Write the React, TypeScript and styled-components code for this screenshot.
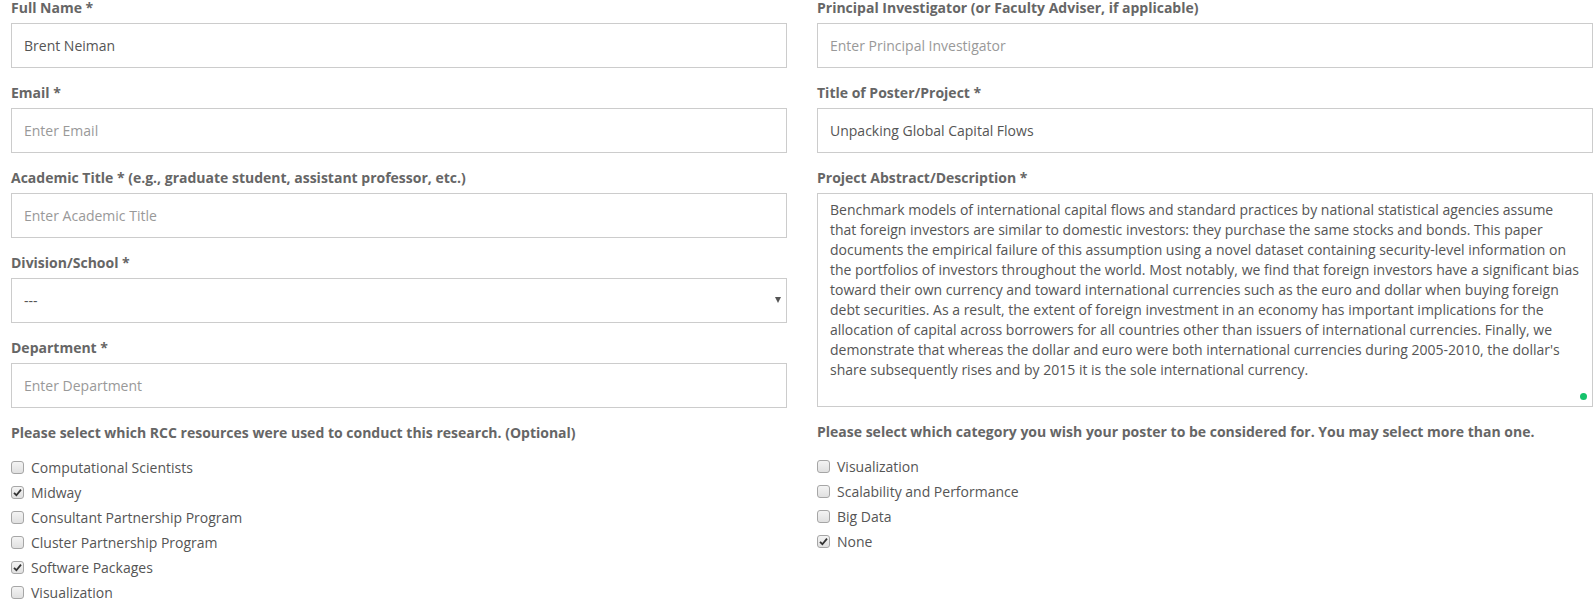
import React from "react";
import styled, { createGlobalStyle } from "styled-components";

const Global = createGlobalStyle`
  html, body { margin: 0; padding: 0; background: #fff; }
  body { font-family: "Open Sans", "Noto Sans", Arial, sans-serif; font-size: 14px; line-height: 20px; color: #555; overflow: hidden; }
  * { box-sizing: border-box; }
`;

const Page = styled.div`
  display: grid;
  grid-template-columns: 776px 776px;
  column-gap: 30px;
  padding-left: 11px;
  margin-top: -2px;
  align-items: start;
`;

const Column = styled.div`
  display: flex;
  flex-direction: column;
`;

const Group = styled.div`
  display: flex;
  flex-direction: column;
  margin-bottom: 15px;
`;

const Label = styled.label`
  display: block;
  font-weight: 700;
  color: #666;
  font-size: 14px;
  line-height: 20px;
  margin-bottom: 5px;
`;

const TextInput = styled.input`
  display: block;
  width: 100%;
  height: 45px;
  padding: 6px 12px;
  border: 1px solid #ccc;
  border-radius: 0;
  font-family: inherit;
  font-size: 14px;
  color: #555;
  background: #fff;
  outline: none;
  &::placeholder { color: #999; opacity: 1; }
`;

const SelectWrap = styled.div`
  position: relative;
`;

const Select = styled.select`
  display: block;
  width: 100%;
  height: 45px;
  padding: 6px 12px;
  border: 1px solid #ccc;
  border-radius: 0;
  font-family: inherit;
  font-size: 14px;
  color: #555;
  background: #fff;
  appearance: none;
  -webkit-appearance: none;
  outline: none;
`;

const Arrow = styled.span`
  position: absolute;
  right: 6px;
  top: 19px;
  width: 0;
  height: 0;
  border-left: 3px solid transparent;
  border-right: 3px solid transparent;
  border-top: 6px solid #555;
  pointer-events: none;
`;

const AreaWrap = styled.div`
  position: relative;
`;

const TextArea = styled.textarea`
  display: block;
  width: 100%;
  height: 214px;
  padding: 6px 12px;
  border: 1px solid #ccc;
  border-radius: 0;
  font-family: inherit;
  font-size: 14px;
  line-height: 20px;
  color: #555;
  background: #fff;
  resize: none;
  overflow: hidden;
  outline: none;
`;

const Dot = styled.span`
  position: absolute;
  right: 6px;
  bottom: 7px;
  width: 7px;
  height: 7px;
  border-radius: 50%;
  background: #15c26b;
`;

const SectionTitle = styled.div`
  font-weight: 700;
  color: #666;
  line-height: 20px;
  margin-bottom: 12px;
`;

const CheckList = styled.div`
  display: flex;
  flex-direction: column;
`;

const CheckRow = styled.label`
  display: flex;
  align-items: center;
  height: 25px;
  color: #555;
`;

const Box = styled.span<{ $checked?: boolean }>`
  display: inline-flex;
  align-items: center;
  justify-content: center;
  width: 13px;
  height: 13px;
  margin-right: 7px;
  border: 1px solid #a6a6a6;
  border-radius: 3px;
  background: linear-gradient(#f4f4f4, #e0e0e0);
  flex: none;
`;

const Check = ({ checked, label }: { checked?: boolean; label: string }) => (
  <CheckRow>
    <Box $checked={checked}>
      {checked && (
        <svg width="9" height="9" viewBox="0 0 9 9">
          <path d="M1 4.8 L3.4 7.2 L8 1.6" fill="none" stroke="#333" strokeWidth="1.8" />
        </svg>
      )}
    </Box>
    {label}
  </CheckRow>
);

const abstract =
  "Benchmark models of international capital flows and standard practices by national statistical agencies assume that foreign investors are similar to domestic investors: they purchase the same stocks and bonds. This paper documents the empirical failure of this assumption using a novel dataset containing security-level information on the portfolios of investors throughout the world. Most notably, we find that foreign investors have a significant bias toward their own currency and toward international currencies such as the euro and dollar when buying foreign debt securities. As a result, the extent of foreign investment in an economy has important implications for the allocation of capital across borrowers for all countries other than issuers of international currencies. Finally, we demonstrate that whereas the dollar and euro were both international currencies during 2005-2010, the dollar's share subsequently rises and by 2015 it is the sole international currency.";

export default function App() {
  return (
    <>
      <Global />
      <Page>
        <Column>
          <Group>
            <Label>Full Name *</Label>
            <TextInput defaultValue="Brent Neiman" />
          </Group>
          <Group>
            <Label>Email *</Label>
            <TextInput placeholder="Enter Email" />
          </Group>
          <Group>
            <Label>Academic Title * (e.g., graduate student, assistant professor, etc.)</Label>
            <TextInput placeholder="Enter Academic Title" />
          </Group>
          <Group>
            <Label>Division/School *</Label>
            <SelectWrap>
              <Select defaultValue="---">
                <option>---</option>
              </Select>
              <Arrow />
            </SelectWrap>
          </Group>
          <Group>
            <Label>Department *</Label>
            <TextInput placeholder="Enter Department" />
          </Group>
          <SectionTitle>Please select which RCC resources were used to conduct this research. (Optional)</SectionTitle>
          <CheckList>
            <Check label="Computational Scientists" />
            <Check checked label="Midway" />
            <Check label="Consultant Partnership Program" />
            <Check label="Cluster Partnership Program" />
            <Check checked label="Software Packages" />
            <Check label="Visualization" />
          </CheckList>
        </Column>
        <Column>
          <Group>
            <Label>Principal Investigator (or Faculty Adviser, if applicable)</Label>
            <TextInput placeholder="Enter Principal Investigator" />
          </Group>
          <Group>
            <Label>Title of Poster/Project *</Label>
            <TextInput defaultValue="Unpacking Global Capital Flows" />
          </Group>
          <Group>
            <Label>Project Abstract/Description *</Label>
            <AreaWrap>
              <TextArea defaultValue={abstract} rows={10} />
              <Dot />
            </AreaWrap>
          </Group>
          <SectionTitle>Please select which category you wish your poster to be considered for. You may select more than one.</SectionTitle>
          <CheckList>
            <Check label="Visualization" />
            <Check label="Scalability and Performance" />
            <Check label="Big Data" />
            <Check checked label="None" />
          </CheckList>
        </Column>
      </Page>
    </>
  );
}
